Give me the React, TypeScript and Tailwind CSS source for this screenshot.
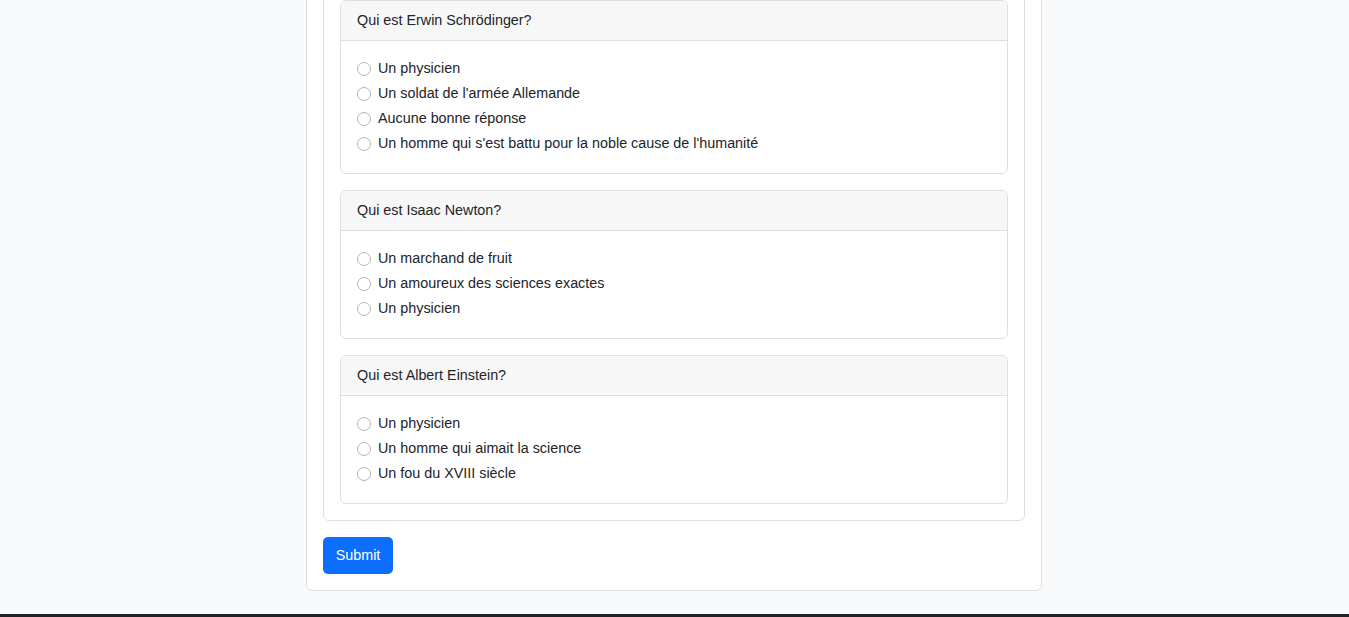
const questions = [
  {
    title: 'Qui est Erwin Schrödinger?',
    answers: [
      'Un physicien',
      "Un soldat de l'armée Allemande",
      'Aucune bonne réponse',
      "Un homme qui s'est battu pour la noble cause de l'humanité",
    ],
  },
  {
    title: 'Qui est Isaac Newton?',
    answers: ['Un marchand de fruit', 'Un amoureux des sciences exactes', 'Un physicien'],
  },
  {
    title: 'Qui est Albert Einstein?',
    answers: ['Un physicien', 'Un homme qui aimait la science', 'Un fou du XVIII siècle'],
  },
]

function Question({ q, index }: { q: (typeof questions)[number]; index: number }) {
  return (
    <div className="bg-white border border-[#dfdfdf] rounded-[6px] overflow-hidden">
      <div className="bg-[#f7f7f7] border-b border-[#dfdfdf] px-4 h-[40px] flex items-center">
        {q.title}
      </div>
      <div className="px-4 pt-[15px] pb-[17px]">
        {q.answers.map((a) => (
          <label key={a} className="flex items-center h-[25px] cursor-pointer">
            <span className="w-[14px] h-[14px] rounded-full border border-[#b5b5b5] bg-white shrink-0" />
            <input type="radio" name={`q${index}`} className="hidden" />
            <span className="ml-[7px]">{a}</span>
          </label>
        ))}
      </div>
    </div>
  )
}

export default function App() {
  return (
    <div
      className="min-h-screen bg-[#f8f9fa] flex flex-col text-[14.35px] text-[#212529]"
      style={{ fontFamily: '"Liberation Sans", Arial, sans-serif' }}
    >
      <div className="w-[736px] ml-[306px] mt-[-34px] bg-white border border-[#dfdfdf] rounded-[6px] p-4">
        <div className="border border-[#dfdfdf] rounded-[6px] p-4 flex flex-col gap-4">
          {questions.map((q, i) => (
            <Question key={q.title} q={q} index={i} />
          ))}
        </div>
        <button
          type="button"
          className="mt-4 h-[37px] w-[70px] bg-[#0d6efd] text-white rounded-[5px] text-[14.35px]"
        >
          Submit
        </button>
      </div>
      <div className="mt-[23px] h-[60px] bg-[#212529]" />
    </div>
  )
}
